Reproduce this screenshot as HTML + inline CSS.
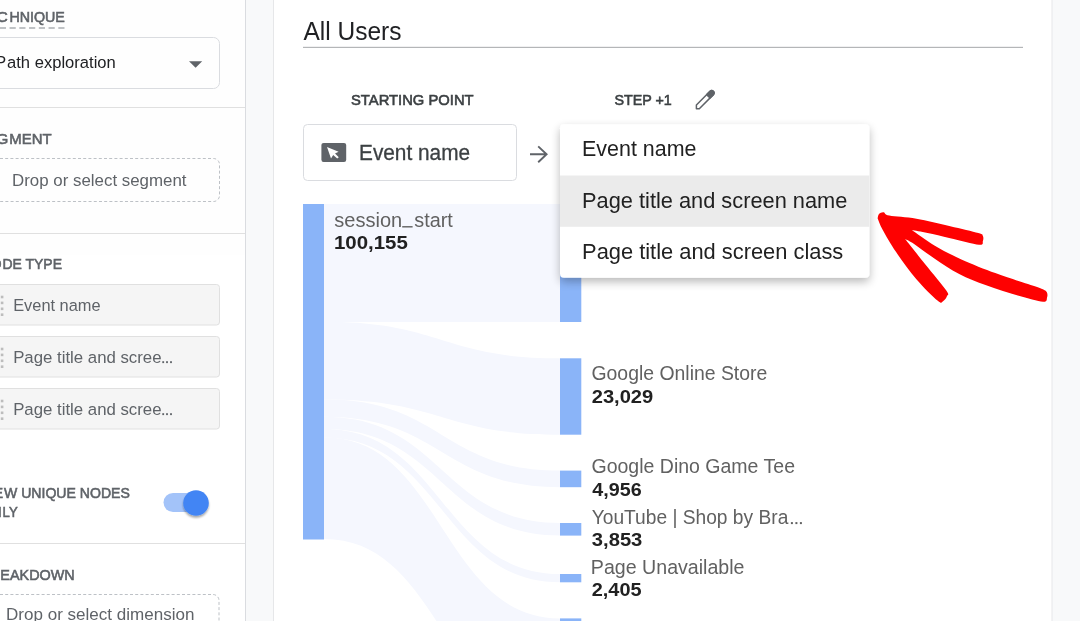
<!DOCTYPE html>
<html><head><meta charset="utf-8"><title>Path exploration</title>
<style>
*{margin:0;padding:0}
html,body{width:1080px;height:621px;overflow:hidden;background:#f8f9fa}
svg{display:block;position:absolute;left:0;top:0;will-change:transform;opacity:0.999}
text{font-family:"Liberation Sans",sans-serif;white-space:pre}
</style></head><body>
<svg width="1080" height="621" viewBox="0 0 1080 621">
<defs>
<filter id="sh" x="-20%" y="-20%" width="140%" height="150%"><feGaussianBlur in="SourceAlpha" stdDeviation="5"/><feOffset dy="4"/><feComponentTransfer><feFuncA type="linear" slope="0.28"/></feComponentTransfer><feMerge><feMergeNode/><feMergeNode in="SourceGraphic"/></feMerge></filter>
<filter id="sh2" x="-30%" y="-30%" width="160%" height="170%"><feGaussianBlur in="SourceAlpha" stdDeviation="1.2"/><feOffset dy="1.5"/><feComponentTransfer><feFuncA type="linear" slope="0.35"/></feComponentTransfer><feMerge><feMergeNode/><feMergeNode in="SourceGraphic"/></feMerge></filter>
</defs>
<rect width="1080" height="621" fill="#f8f9fa"/>

<g id="left-panel">
<rect x="0" y="0" width="245" height="621" fill="#fff"/>
<rect x="245" y="0" width="1" height="621" fill="#dadce0"/>
<text y="21.7" font-size="15.2" fill="#5f6368" stroke="#5f6368" stroke-width="0.6" x="7.72" text-anchor="end">TEC</text>
<text y="21.7" font-size="15.2" fill="#5f6368" stroke="#5f6368" stroke-width="0.6" x="9.41" textLength="55.49" lengthAdjust="spacingAndGlyphs">HNIQUE</text>
<line x1="-0.2" y1="28" x2="65" y2="28" stroke="#80868b" stroke-width="1.1" stroke-dasharray="6.2 3.55"/>
<rect x="-6" y="37.5" width="225.5" height="51" rx="6" fill="#fff" stroke="#dadce0"/>
<text y="67.7" font-size="16.8" fill="#202124" x="6.19" text-anchor="end">P</text>
<text y="67.7" font-size="16.8" fill="#202124" x="7.02" textLength="108.74" lengthAdjust="spacingAndGlyphs">ath exploration</text>
<path d="M189 61.2h13.2l-6.6 6.6z" fill="#5f6368"/>
<rect x="0" y="107" width="245" height="1" fill="#e0e0e0"/>
<text y="143.5" font-size="15.2" fill="#5f6368" stroke="#5f6368" stroke-width="0.6" x="8.43" text-anchor="end">SEG</text>
<text y="143.5" font-size="15.2" fill="#5f6368" stroke="#5f6368" stroke-width="0.6" x="9.35" textLength="42.24" lengthAdjust="spacingAndGlyphs">MENT</text>
<rect x="-6" y="158.5" width="225.5" height="43" rx="6" fill="#fff" stroke="#bdc1c6" stroke-dasharray="3 2.2"/>
<text y="186" font-size="16.8" fill="#5f6368" x="12.05" textLength="174.44" lengthAdjust="spacingAndGlyphs">Drop or select segment</text>
<rect x="0" y="233" width="245" height="1" fill="#e0e0e0"/>
<text y="269.3" font-size="15.2" fill="#5f6368" stroke="#5f6368" stroke-width="0.6" x="1.54" text-anchor="end">NO</text>
<text y="269.3" font-size="15.2" fill="#5f6368" stroke="#5f6368" stroke-width="0.6" x="2.52" textLength="59.49" lengthAdjust="spacingAndGlyphs">DE TYPE</text>
<rect x="-6" y="284.5" width="225.5" height="40.5" rx="3" fill="#f5f5f5" stroke="#e0e0e0"/>
<rect x="0.8" y="295.7" width="2.6" height="2.6" fill="#bdbdbd"/>
<rect x="0.8" y="301.6" width="2.6" height="2.6" fill="#bdbdbd"/>
<rect x="0.8" y="307.5" width="2.6" height="2.6" fill="#bdbdbd"/>
<rect x="0.8" y="313.4" width="2.6" height="2.6" fill="#bdbdbd"/>
<text y="310.6" font-size="16.8" fill="#5f6368" x="13.15" textLength="87.49" lengthAdjust="spacingAndGlyphs">Event name</text>
<rect x="-6" y="336.5" width="225.5" height="40.5" rx="3" fill="#f5f5f5" stroke="#e0e0e0"/>
<rect x="0.8" y="347.7" width="2.6" height="2.6" fill="#bdbdbd"/>
<rect x="0.8" y="353.6" width="2.6" height="2.6" fill="#bdbdbd"/>
<rect x="0.8" y="359.5" width="2.6" height="2.6" fill="#bdbdbd"/>
<rect x="0.8" y="365.4" width="2.6" height="2.6" fill="#bdbdbd"/>
<text y="362.6" font-size="16.8" fill="#5f6368" x="13.15" textLength="148.39" lengthAdjust="spacingAndGlyphs">Page title and scree</text>
<rect x="162.3" y="361.2" width="1.8" height="1.9" fill="#5f6368"/>
<rect x="166.1" y="361.2" width="1.8" height="1.9" fill="#5f6368"/>
<rect x="170.1" y="361.2" width="1.8" height="1.9" fill="#5f6368"/>
<rect x="-6" y="388.5" width="225.5" height="40.5" rx="3" fill="#f5f5f5" stroke="#e0e0e0"/>
<rect x="0.8" y="399.7" width="2.6" height="2.6" fill="#bdbdbd"/>
<rect x="0.8" y="405.6" width="2.6" height="2.6" fill="#bdbdbd"/>
<rect x="0.8" y="411.5" width="2.6" height="2.6" fill="#bdbdbd"/>
<rect x="0.8" y="417.4" width="2.6" height="2.6" fill="#bdbdbd"/>
<text y="414.7" font-size="16.8" fill="#5f6368" x="13.15" textLength="148.39" lengthAdjust="spacingAndGlyphs">Page title and scree</text>
<rect x="162.3" y="413.2" width="1.8" height="1.9" fill="#5f6368"/>
<rect x="166.1" y="413.2" width="1.8" height="1.9" fill="#5f6368"/>
<rect x="170.1" y="413.2" width="1.8" height="1.9" fill="#5f6368"/>
<text y="498.1" font-size="15.2" fill="#5f6368" stroke="#5f6368" stroke-width="0.6" x="3.12" text-anchor="end">VIE</text>
<text y="498.1" font-size="15.2" fill="#5f6368" stroke="#5f6368" stroke-width="0.6" x="3.98" textLength="125.89" lengthAdjust="spacingAndGlyphs">W UNIQUE NODES</text>
<text y="516.7" font-size="15.2" fill="#5f6368" stroke="#5f6368" stroke-width="0.6" x="1.65" text-anchor="end">ON</text>
<text y="516.7" font-size="15.2" fill="#5f6368" stroke="#5f6368" stroke-width="0.6" x="2.57" textLength="15.09" lengthAdjust="spacingAndGlyphs">LY</text>
<rect x="163.5" y="493" width="43" height="19" rx="9.5" fill="#a3c3f9"/>
<circle cx="196" cy="503" r="12.8" fill="#4285f4" filter="url(#sh2)"/>
<rect x="0" y="543" width="245" height="1" fill="#e0e0e0"/>
<text y="579.5" font-size="15.2" fill="#5f6368" stroke="#5f6368" stroke-width="0.6" x="-0.53" text-anchor="end">BR</text>
<text y="579.5" font-size="15.2" fill="#5f6368" stroke="#5f6368" stroke-width="0.6" x="0.31" textLength="74.45" lengthAdjust="spacingAndGlyphs">EAKDOWN</text>
<rect x="-6" y="594.5" width="225" height="43" rx="6" fill="#fff" stroke="#bdc1c6" stroke-dasharray="3 2.2"/>
<text y="620" font-size="16.8" fill="#5f6368" x="6.05" textLength="188.33" lengthAdjust="spacingAndGlyphs">Drop or select dimension</text>
</g>
<g id="card">
<rect x="273.5" y="-2" width="778.5" height="625" fill="#fff" stroke="#e6e7e9" stroke-width="1"/>
<text y="40.4" font-size="25.8" fill="#202124" x="303.46" textLength="98.03" lengthAdjust="spacingAndGlyphs">All Users</text>
<rect x="303" y="46.8" width="720" height="1.2" fill="#b4b6b8"/>
<text y="104.6" font-size="15.2" fill="#3c4043" stroke="#3c4043" stroke-width="0.6" x="351.03" textLength="122.59" lengthAdjust="spacingAndGlyphs">STARTING POINT</text>
<text y="104.5" font-size="15.2" fill="#3c4043" stroke="#3c4043" stroke-width="0.6" x="614.43" textLength="57.42" lengthAdjust="spacingAndGlyphs">STEP +1</text>
<path d="M696.4 108.8V104.95L710.04 91.31A2.35 2.35 0 0 1 713.36 94.63L699.3 108.7Z" fill="none" stroke="#5f6368" stroke-width="1.5" stroke-linejoin="round"/><path d="M706.7 94.65L710.04 91.31A2.35 2.35 0 0 1 713.36 94.63L710.02 97.97Z" fill="#5f6368" stroke="#5f6368" stroke-width="1.5" stroke-linejoin="round"/>
<rect x="303.5" y="124.5" width="213" height="56" rx="4" fill="#fff" stroke="#dadce0"/>
<rect x="321.4" y="142.9" width="24.8" height="19" rx="2.2" fill="#5f6368"/>
<path d="M327 147L338.6 151.7L335 153.6L338.8 157.2L337.2 158.6L333.2 155L331 158.6z" fill="#fff"/>
<text y="160.3" font-size="21.3" fill="#3c4043" stroke="#3c4043" stroke-width="0.3" x="359.02" textLength="111.05" lengthAdjust="spacingAndGlyphs">Event name</text>
<path d="M530 154.3H546.5M538.2 146.4L546.6 154.3L538.2 162.3" fill="none" stroke="#5f6368" stroke-width="1.9"/>
<path d="M324 204C442.0 204 442.0 204 560 204V322C442.0 322 442.0 322 324 322z" fill="#f5f7fe"/>
<path d="M324 321.8C442.0 321.8 442.0 358.3 560 358.3V434.7C442.0 434.7 442.0 399.5 324 399.5z" fill="#f5f7fe"/>
<path d="M324 399.3C442.0 399.3 442.0 470.6 560 470.6V487.2C442.0 487.2 442.0 416.8 324 416.8z" fill="#f5f7fe"/>
<path d="M324 416.7C442.0 416.7 442.0 523 560 523V535.6C442.0 535.6 442.0 429 324 429z" fill="#f5f7fe"/>
<path d="M324 428.9C442.0 428.9 442.0 574 560 574V582.3C442.0 582.3 442.0 437.4 324 437.4z" fill="#f5f7fe"/>
<path d="M324 437.3C442.0 437.3 442.0 618.4 560 618.4V720C442.0 720 442.0 539 324 539z" fill="#f5f7fe"/>
<rect x="303" y="204" width="21" height="335.5" fill="#8ab4f8"/>
<rect x="560" y="204" width="21.3" height="118.0" fill="#8ab4f8"/>
<rect x="560" y="358.3" width="21.3" height="76.4" fill="#8ab4f8"/>
<rect x="560" y="470.6" width="21.3" height="16.6" fill="#8ab4f8"/>
<rect x="560" y="523" width="21.3" height="12.6" fill="#8ab4f8"/>
<rect x="560" y="574" width="21.3" height="8.3" fill="#8ab4f8"/>
<rect x="560" y="618.4" width="21.3" height="81.6" fill="#8ab4f8"/>
<rect x="402.2" y="226.1" width="10.4" height="1.4" fill="#616161"/>
<text y="226.7" font-size="19.3" fill="#616161" x="334.31" textLength="67.92" lengthAdjust="spacingAndGlyphs">session</text>
<text y="226.7" font-size="19.3" fill="#616161" x="414.31" textLength="38.55" lengthAdjust="spacingAndGlyphs">start</text>
<text y="248.9" font-size="18.9" fill="#212121" font-weight="bold" x="333.93" textLength="73.88" lengthAdjust="spacingAndGlyphs">100,155</text>
<text y="379.9" font-size="19.3" fill="#616161" x="591.48" textLength="175.85" lengthAdjust="spacingAndGlyphs">Google Online Store</text>
<text y="402.8" font-size="18.9" fill="#212121" font-weight="bold" x="591.71" textLength="61.51" lengthAdjust="spacingAndGlyphs">23,029</text>
<text y="472.9" font-size="19.3" fill="#616161" x="591.46" textLength="203.55" lengthAdjust="spacingAndGlyphs">Google Dino Game Tee</text>
<text y="496" font-size="18.9" fill="#212121" font-weight="bold" x="592.33" textLength="49.38" lengthAdjust="spacingAndGlyphs">4,956</text>
<text y="523.8" font-size="19.3" fill="#616161" x="591.71" textLength="196.62" lengthAdjust="spacingAndGlyphs">YouTube | Shop by Bra</text>
<text y="546" font-size="18.9" fill="#212121" font-weight="bold" x="591.82" textLength="50.55" lengthAdjust="spacingAndGlyphs">3,853</text>
<text y="573.8" font-size="19.3" fill="#616161" x="590.86" textLength="153.68" lengthAdjust="spacingAndGlyphs">Page Unavailable</text>
<text y="596" font-size="18.9" fill="#212121" font-weight="bold" x="591.73" textLength="49.84" lengthAdjust="spacingAndGlyphs">2,405</text>
<rect x="790.9" y="522.1" width="2" height="2" fill="#616161"/>
<rect x="795.4" y="522.1" width="2" height="2" fill="#616161"/>
<rect x="799.9" y="522.1" width="2" height="2" fill="#616161"/>
<g filter="url(#sh)"><rect x="560" y="124.2" width="309.3" height="153.6" rx="4" fill="#fff"/></g>
<rect x="560" y="175.5" width="309.3" height="51.3" fill="#ebebeb"/>
<text y="156.2" font-size="21.6" fill="#212121" x="582.05" textLength="114.35" lengthAdjust="spacingAndGlyphs">Event name</text>
<text y="207.6" font-size="21.6" fill="#212121" x="582.05" textLength="265.27" lengthAdjust="spacingAndGlyphs">Page title and screen name</text>
<text y="259.2" font-size="21.6" fill="#212121" x="582.05" textLength="261.23" lengthAdjust="spacingAndGlyphs">Page title and screen class</text>
<path d="M877.6 218.3C877.8 217.6 878.1 214.8 879.2 213.8C880.2 212.8 882.0 211.9 883.7 212.2C885.4 212.5 883.9 214.5 889.3 215.6C894.8 216.7 906.2 217.0 916.4 218.8C926.5 220.5 939.8 223.8 950.2 226.2C960.5 228.6 972.9 231.4 978.3 233.0C983.8 234.6 982.1 234.6 982.9 235.9C983.6 237.2 983.5 239.4 982.9 240.9C982.2 242.3 984.5 245.1 979.0 244.7C973.6 244.2 958.7 240.1 950.2 238.2C941.6 236.2 934.0 234.3 927.6 233.0C921.2 231.6 914.5 230.5 911.8 230.0L911.8 230.0C915.6 232.6 926.1 240.5 934.4 245.4C942.7 250.3 951.3 254.7 961.4 259.4C971.6 264.0 985.1 269.3 995.3 273.1C1005.4 276.9 1014.6 279.8 1022.3 282.3C1030.0 284.9 1037.4 287.0 1041.5 288.7C1045.5 290.3 1045.7 290.6 1046.7 292.0C1047.6 293.5 1047.7 295.6 1047.1 297.2C1046.5 298.8 1047.9 302.0 1043.0 301.7C1038.2 301.5 1027.3 298.4 1017.8 295.6C1008.3 292.9 996.0 288.9 986.2 285.3C976.5 281.7 967.8 278.5 959.2 274.0C950.5 269.5 941.9 263.4 934.4 258.4C926.9 253.5 919.0 247.3 914.1 244.0C909.2 240.8 906.6 239.9 905.1 239.1L905.1 239.1C908.5 243.3 918.5 256.0 925.4 264.5C932.2 273.1 942.7 285.2 946.3 290.5C949.9 295.7 947.6 294.3 947.0 296.1C946.5 297.9 944.5 300.5 943.0 301.3C941.4 302.1 942.2 304.5 937.8 300.8C933.3 297.1 923.3 287.3 916.4 279.2C909.4 271.1 901.7 260.4 896.1 252.1C890.4 243.9 885.6 235.2 882.5 229.6C879.5 224.0 878.4 220.2 877.6 218.3z" fill="#fe0000"/>
</g>
</svg></body></html>
